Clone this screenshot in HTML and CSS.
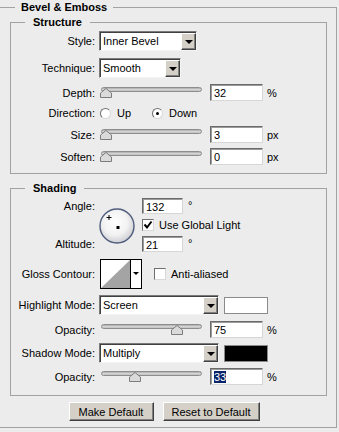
FILE: index.html
```html
<!DOCTYPE html>
<html>
<head>
  <title>Layer Style - Bevel &amp; Emboss</title>
  <link rel="stylesheet" href="styles.css">
</head>
<body>
  <fieldset class="group outer">
    <legend>Bevel &amp; Emboss</legend>

    <fieldset class="group structure">
      <legend>Structure</legend>

      <div class="row row-select first">
        <label>Style:</label>
        <div class="select style-select"><span>Inner Bevel</span><b class="drop"></b></div>
      </div>
      <div class="row row-select loose">
        <label>Technique:</label>
        <div class="select technique-select"><span>Smooth</span><b class="drop"></b></div>
      </div>
      <div class="row row-slider">
        <label>Depth:</label>
        <div class="field">
          <div class="slider">
            <div class="track"></div>
            <svg class="thumb" style="left:1px" width="12" height="10" viewBox="0 0 12 10"><polygon points="0.5,9.5 0.5,5 6,0.5 11.5,5 11.5,9.5" /></svg>
          </div>
          <div class="input">32</div>
          <span class="unit">%</span>
        </div>
      </div>
      <div class="row row-radio tight">
        <label>Direction:</label>
        <div class="radios">
          <span class="radio"></span><span class="radio-text">Up</span>
          <span class="radio checked"></span><span class="radio-text">Down</span>
        </div>
      </div>
      <div class="row row-slider">
        <label>Size:</label>
        <div class="field">
          <div class="slider">
            <div class="track"></div>
            <svg class="thumb" style="left:1px" width="12" height="10" viewBox="0 0 12 10"><polygon points="0.5,9.5 0.5,5 6,0.5 11.5,5 11.5,9.5" /></svg>
          </div>
          <div class="input">3</div>
          <span class="unit">px</span>
        </div>
      </div>
      <div class="row row-slider tight">
        <label>Soften:</label>
        <div class="field">
          <div class="slider">
            <div class="track"></div>
            <svg class="thumb" style="left:1px" width="12" height="10" viewBox="0 0 12 10"><polygon points="0.5,9.5 0.5,5 6,0.5 11.5,5 11.5,9.5" /></svg>
          </div>
          <div class="input">0</div>
          <span class="unit">px</span>
        </div>
      </div>
    </fieldset>

    <fieldset class="group shading">
      <legend>Shading</legend>

      <div class="angle-block">
        <label class="angle-label">Angle:</label>
        <div class="dial">
          <svg width="36" height="36" viewBox="0 0 36 36">
            <defs>
              <radialGradient id="dialfill" cx="45%" cy="40%" r="60%">
                <stop offset="0" stop-color="#ffffff" />
                <stop offset="0.6" stop-color="#f2f2f2" />
                <stop offset="1" stop-color="#cfcfd4" />
              </radialGradient>
            </defs>
            <circle cx="18" cy="18" r="17" fill="url(#dialfill)" stroke="#4f5d7c" stroke-width="1.4" />
            <rect x="17.5" y="18" width="3" height="3" fill="#000" />
            <path d="M7.5 9.5 H12.5 M10 7 V12" stroke="#000" stroke-width="1" />
          </svg>
        </div>
        <div class="small-field angle-field"><div class="input small">132</div><span class="deg">°</span></div>
        <div class="check-line global">
          <span class="checkbox"><svg width="10" height="10" viewBox="0 0 10 10"><path d="M1.5 4.5 L4 7.5 L8.5 1.5" fill="none" stroke="#000" stroke-width="2" /></svg></span>
          <span>Use Global Light</span>
        </div>
        <label class="altitude-label">Altitude:</label>
        <div class="small-field altitude-field"><div class="input small">21</div><span class="deg">°</span></div>
      </div>

      <div class="row row-gloss loose">
        <label>Gloss Contour:</label>
        <div class="gloss">
          <div class="contour">
            <svg class="curve" width="29" height="28" viewBox="0 0 29 28"><polygon points="0,28 29,0 29,28" fill="#a4a4a4" /></svg>
            <span class="contour-drop"><b></b></span>
          </div>
          <span class="checkbox anti"></span>
          <span class="check-text">Anti-aliased</span>
        </div>
      </div>
      <div class="row row-select">
        <label>Highlight Mode:</label>
        <div class="field">
          <div class="select mode-select"><span>Screen</span><b class="drop"></b></div>
          <span class="swatch white"></span>
        </div>
      </div>
      <div class="row row-slider">
        <label>Opacity:</label>
        <div class="field">
          <div class="slider">
            <div class="track"></div>
            <svg class="thumb" style="left:72px" width="12" height="10" viewBox="0 0 12 10"><polygon points="0.5,9.5 0.5,5 6,0.5 11.5,5 11.5,9.5" /></svg>
          </div>
          <div class="input">75</div>
          <span class="unit">%</span>
        </div>
      </div>
      <div class="row row-select tight">
        <label>Shadow Mode:</label>
        <div class="field">
          <div class="select mode-select"><span>Multiply</span><b class="drop"></b></div>
          <span class="swatch black"></span>
        </div>
      </div>
      <div class="row row-slider tight">
        <label>Opacity:</label>
        <div class="field">
          <div class="slider">
            <div class="track"></div>
            <svg class="thumb" style="left:30px" width="12" height="10" viewBox="0 0 12 10"><polygon points="0.5,9.5 0.5,5 6,0.5 11.5,5 11.5,9.5" /></svg>
          </div>
          <div class="input"><span class="selected">33</span></div>
          <span class="unit">%</span>
        </div>
      </div>
    </fieldset>

    <div class="buttons">
      <button class="btn make">Make Default</button>
      <button class="btn reset">Reset to Default</button>
    </div>
  </fieldset>
</body>
</html>
```

FILE: styles.css
```css
/* Photoshop layer style dialog, classic look */
* {
  box-sizing: border-box;
}

body {
  margin: 0;
  background-color: #ececec;
  font-family: "Liberation Sans", Arial, sans-serif;
  font-size: 11px;
  color: #000;
  overflow: hidden;
}

.group {
  margin: 0;
  min-width: 0;
  padding: 2px 0 8px;
  border: 1px solid #a2a2a2;
}

.group legend {
  margin-left: 14px;
  padding: 0 8px;
  font-weight: bold;
  line-height: 14px;
}

.outer {
  margin-left: -1px;
  width: 338px;
  height: 428px;
  padding: 0 9px 0 10px;
}

.outer > legend {
  margin-left: 5px;
  padding: 0 6px;
}

.structure {
  margin-top: 1px;
}

.shading {
  margin-top: 7px;
  padding: 3px 0 10px;
}

/* rows */
.row {
  display: grid;
  grid-template-columns: 84px 1fr;
  column-gap: 4px;
  align-items: center;
  margin-top: 6px;
}

.row.first {
  margin-top: 0;
}

.row.tight {
  margin-top: 5px;
}

.row.loose {
  margin-top: 7px;
}

.row-select {
  height: 20px;
}

.row-slider {
  height: 17px;
}

.row-radio {
  height: 14px;
}

.row-gloss {
  height: 30px;
}

label {
  text-align: right;
  white-space: nowrap;
}

.field {
  display: flex;
  align-items: center;
  height: 100%;
}

/* dropdowns */
.select {
  display: flex;
  height: 20px;
  background-color: #fff;
  border: 1px solid;
  border-color: #7a7a7a #f4f4f4 #f4f4f4 #7a7a7a;
  box-shadow: inset 1px 1px 0 #404040;
}

.select span {
  flex: 1;
  padding: 2px 0 0 3px;
  line-height: 15px;
  white-space: nowrap;
  overflow: hidden;
}

.style-select {
  width: 98px;
}

.technique-select {
  width: 82px;
}

.mode-select {
  width: 120px;
}

.drop {
  position: relative;
  width: 15px;
  margin: 1px 0 0;
  background-color: #d4d0c8;
  border: 1px solid;
  border-color: #fff #404040 #404040 #fff;
  box-shadow: inset -1px -1px 0 #808080;
}

.drop::after {
  content: "";
  position: absolute;
  left: 3px;
  top: 6px;
  border-left: 4px solid transparent;
  border-right: 4px solid transparent;
  border-top: 4px solid #000;
}

/* sliders */
.slider {
  position: relative;
  width: 106px;
  height: 17px;
  padding: 3px 0 0 2px;
}

.track {
  width: 101px;
  height: 5px;
  border: 1px solid #8d8d8d;
  border-radius: 3px;
  background: linear-gradient(#a9a9a9, #dcdcdc 60%, #b7b7b7);
}

.thumb {
  position: absolute;
  top: 4px;
}

.thumb polygon {
  fill: #dadada;
  stroke: #7d7d7d;
  stroke-width: 1;
}

.input {
  width: 53px;
  height: 17px;
  margin-left: 5px;
  padding: 1px 0 0 3px;
  line-height: 14px;
  background-color: #fff;
  border: 1px solid;
  border-color: #6a6a6a #d6d6d6 #d6d6d6 #6a6a6a;
  box-shadow: inset 1px 1px 0 #9c9c9c;
}

.input .selected {
  background-color: #0a246a;
  color: #fff;
}

.unit {
  margin-left: 4px;
}

/* radio buttons */
.radios {
  display: flex;
  align-items: center;
  padding-left: 1px;
}

.radio {
  position: relative;
  width: 11px;
  height: 11px;
  border-radius: 50%;
  background-color: #fff;
  border: 1px solid;
  border-color: #6f6f6f #d8d8d8 #d8d8d8 #6f6f6f;
}

.radio.checked::after {
  content: "";
  position: absolute;
  left: 3px;
  top: 3px;
  width: 3px;
  height: 3px;
  border-radius: 50%;
  background-color: #000;
}

.radio-text {
  margin: 0 21px 0 6px;
}

/* angle & altitude */
.angle-block {
  display: grid;
  grid-template-columns: 84px 47px 1fr;
  grid-template-rows: 16px 22px 16px;
  align-items: center;
}

.angle-label {
  grid-column: 1;
  grid-row: 1;
}

.altitude-label {
  grid-column: 1;
  grid-row: 3;
}

.dial {
  grid-column: 2;
  grid-row: 1 / 4;
  margin: 2px 0 0 4px;
  height: 36px;
}

.dial svg {
  display: block;
}

.small-field {
  grid-column: 3;
  display: flex;
  align-items: center;
  height: 16px;
}

.angle-field {
  grid-row: 1;
}

.altitude-field {
  grid-row: 3;
}

.small-field .input {
  width: 41px;
  height: 16px;
  margin-left: 0;
}

.deg {
  margin: -3px 0 0 5px;
}

.check-line {
  display: flex;
  align-items: center;
}

.global {
  grid-column: 3;
  grid-row: 2;
}

.checkbox {
  display: inline-flex;
  align-items: center;
  justify-content: center;
  width: 12px;
  height: 12px;
  margin-right: 5px;
  background-color: #fff;
  border: 1px solid;
  border-color: #6f6f6f #d8d8d8 #d8d8d8 #6f6f6f;
}

.checkbox svg {
  display: block;
}

/* gloss contour */
.gloss {
  display: flex;
  align-items: center;
}

.contour {
  display: flex;
  width: 42px;
  height: 30px;
  margin-left: 1px;
  background-color: #fff;
  border: 1px solid #000;
}

.curve {
  display: block;
}

.contour-drop {
  position: relative;
  flex: 1;
  border-left: 1px solid #000;
}

.contour-drop b {
  position: absolute;
  left: 2px;
  top: 12px;
  border-left: 3px solid transparent;
  border-right: 3px solid transparent;
  border-top: 3px solid #000;
}

.anti {
  margin-left: 12px;
}

/* colour swatches */
.swatch {
  width: 44px;
  height: 17px;
  margin-left: 5px;
  border: 1px solid #8a8a8a;
}

.swatch.white {
  background-color: #fff;
}

.swatch.black {
  background-color: #000;
}

/* buttons */
.buttons {
  display: flex;
  justify-content: center;
  gap: 9px;
  margin-top: 6px;
  padding-right: 9px;
}

.btn {
  height: 19px;
  padding: 0;
  font-family: inherit;
  font-size: 11px;
  color: #000;
  background-color: #d4d0c8;
  border: 1px solid;
  border-color: #fff #404040 #404040 #fff;
  box-shadow: inset -1px -1px 0 #808080;
}

.make {
  width: 85px;
}

.reset {
  width: 97px;
}
```
